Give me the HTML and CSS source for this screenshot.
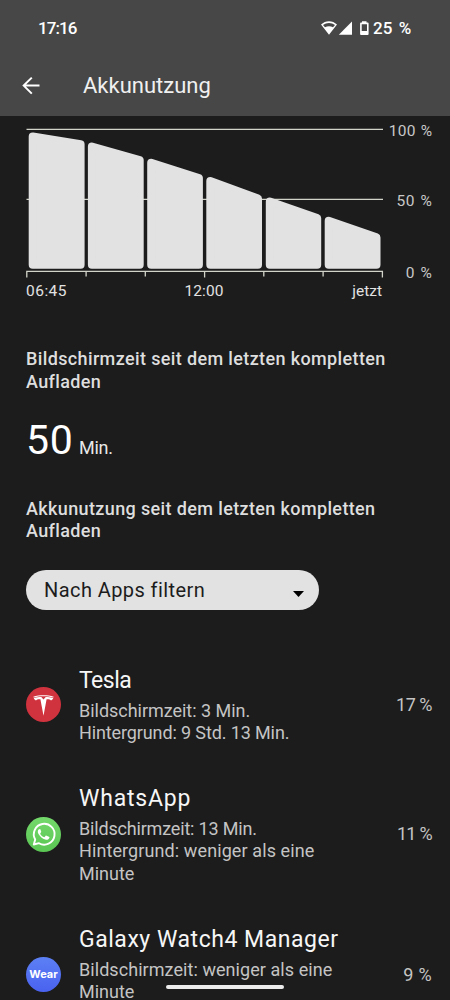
FILE: index.html
```
<!DOCTYPE html>
<html lang="de">
<head>
<meta charset="utf-8">
<title>Akkunutzung</title>
<link rel="stylesheet" href="styles.css">
</head>
<body>
<div class="screen">
  <header class="top">
    <div class="status">
      <span class="clock">17:16</span>
      <svg class="status-icons" width="51" height="21" viewBox="320 18 51 21" fill="#fff">
        <path fill-rule="evenodd" d="M321 24.600C325.500 20 332.500 20 337 24.600L329 34.700ZM323 24.900L325 27.300C327.500 25.800 330.500 25.800 333 27.300L335 24.900C331.500 22.200 326.500 22.200 323 24.900Z"/>
        <path d="M338.800 34.700L352 21.500V34.700Z"/>
        <path fill-rule="evenodd" d="M362 21.200H366.500V22.500H367.700Q368.600 22.500 368.600 23.400V34Q368.600 34.900 367.700 34.900H361Q360.100 34.900 360.100 34V23.400Q360.100 22.500 361 22.500H362ZM361.700 24.300V31H367V24.300Z"/>
      </svg>
      <span class="charge">25 %</span>
    </div>
    <div class="bar">
      <svg class="back" width="20" height="20" viewBox="0 0 20 20" fill="none" stroke="#fff" stroke-width="2"><path d="M18.500 9.600H2.500M10.800 1.600L2.700 9.600L10.800 17.600"/></svg>
      <h1 class="title">Akkunutzung</h1>
    </div>
  </header>

  <section class="chart">
    <div class="plot">
      <svg class="graph" width="358" height="164" viewBox="26 116 358 164">
        <g stroke="#d3d4c9" stroke-width="1.300"><path d="M26.500 129.300H383M26.500 199.400H383"/></g>
        <g fill="#e2e2e2" stroke="#e2e2e2" stroke-width="8" stroke-linejoin="round">
          <path d="M32.700 136.500L80.600 144.300V264.700H32.700Z"/>
          <path d="M91.900 146.500L139.700 160.100V264.700H91.900Z"/>
          <path d="M151.200 162.700L198.900 178.000V264.700H151.200Z"/>
          <path d="M210.300 181.100L258 198.400V264.700H210.300Z"/>
          <path d="M269.800 201.600L317.200 218.100V264.700H269.800Z"/>
          <path d="M328.700 220.800L376.500 237.400V264.700H328.700Z"/>
        </g>
        <path fill="none" stroke="#d3d4c9" stroke-width="1.300" d="M26.800 277.500V271.300H382.400V277.500M86.100 271.300V276.500M145.300 271.300V276.500M204.600 271.300V277.500M263.800 271.300V276.500M323.100 271.300V276.500"/>
      </svg>
      <div class="times"><span class="t1">06:45</span><span class="t2">12:00</span><span class="t3">jetzt</span></div>
    </div>
    <div class="levels"><span class="l1">100 %</span><span class="l2">50 %</span><span class="l3">0 %</span></div>
  </section>

  <h2 class="heading">Bildschirmzeit seit dem letzten kompletten Aufladen</h2>
  <p class="total"><span class="num">50</span><span class="unit">Min.</span></p>
  <h2 class="heading second">Akkunutzung seit dem letzten kompletten Aufladen</h2>

  <div class="filter">
    <span>Nach Apps filtern</span>
    <svg width="11" height="6" viewBox="0 0 11 6"><path d="M0 0H11L5.500 6Z"/></svg>
  </div>

  <ul class="apps">
    <li class="app">
      <svg class="icon" width="35" height="35" viewBox="0 0 35 35">
        <circle cx="17.500" cy="17.500" r="17.500" fill="#d0323e"/>
        <g fill="#fff"><path d="M7.300 9.700C13.500 7.800 21.500 7.800 27.700 9.700L27.400 10.400C21.500 8.900 13.500 8.900 7.600 10.400Z"/>
        <path d="M7.700 11C10.500 10.100 13 9.900 15.300 9.900L17.500 12.600L19.700 9.900C22 9.900 24.500 10.100 27.300 11C26.900 12.300 26.100 13 25 13.400C24.400 12.400 22.800 12.100 20.600 12.200L17.500 28.800L14.400 12.200C12.200 12.100 10.600 12.400 10 13.400C8.900 13 8.100 12.300 7.700 11Z"/></g>
      </svg>
      <div class="info"><h3 class="n1">Tesla</h3><p><span class="d1">Bildschirmzeit: 3 Min.</span><br><span class="d2">Hintergrund: 9 Std. 13 Min.</span></p></div>
      <span class="share s1">17 %</span>
    </li>
    <li class="app">
      <svg class="icon" width="35" height="35" viewBox="0 0 35 35">
        <defs><linearGradient id="green" x2="0" y2="1"><stop stop-color="#74d96b"/><stop offset="1" stop-color="#5ac653"/></linearGradient></defs>
        <circle cx="17.500" cy="17.500" r="17.500" fill="url(#green)"/>
        <path d="M7.800 27.500L9.200 22.400A10.400 10.400 0 1 1 13 26.200Z" fill="none" stroke="#fff" stroke-width="1.900" stroke-linejoin="round"/>
        <path fill="#fff" d="M14.200 11.900C13.700 11.800 13 12 12.600 12.600C11.500 13.800 11.600 15.600 12.500 17C14.100 19.600 16.300 21.700 19.300 22.600C21 23.200 23 22.500 23.400 20.800C23.500 20.200 23.400 20 22.900 19.800L20.500 18.700C20.100 18.500 19.800 18.600 19.500 19L18.600 20C18.300 20.300 18 20.300 17.600 20.100C16.100 19.400 15 18.300 14.300 16.900C14.100 16.500 14.200 16.300 14.500 16C15 15.500 15.400 15 15.200 14.500L14.400 12.400C14.300 12.100 14.300 12 14.200 11.900Z"/>
      </svg>
      <div class="info"><h3 class="n2">WhatsApp</h3><p><span class="d3">Bildschirmzeit: 13 Min.</span><br><span class="d4">Hintergrund: weniger als eine</span><br><span class="d5">Minute</span></p></div>
      <span class="share s2">11 %</span>
    </li>
    <li class="app">
      <div class="icon wear">Wear</div>
      <div class="info tall"><h3 class="n3">Galaxy Watch4 Manager</h3><p><span class="d6">Bildschirmzeit: weniger als eine</span><br><span class="d5">Minute</span></p></div>
      <span class="share s3">9 %</span>
    </li>
  </ul>
  <div class="home"></div>
</div>
</body>
</html>
```
FILE: styles.css
```
* { box-sizing: border-box; margin: 0; padding: 0; }
body { background: #1c1c1c; font-family: Roboto, "Noto Sans", sans-serif; }
.screen { position: relative; width: 450px; height: 1000px; overflow: hidden; background: #1c1c1c; color: #e2e2e2; }

.top { height: 116px; padding-top: 18px; background: #474747; color: #fff; }
.status { display: flex; height: 21px; padding-left: 38px; font-size: 17px; font-weight: 500; line-height: 21px; }
.clock { width: 282px; letter-spacing: -0.9px; }
.status-icons { flex: none; }
.charge { padding-left: 2px; letter-spacing: 0.2px; word-spacing: 1.500px; }
.bar { display: flex; align-items: center; padding: 32px 0 0 21px; }
.back { margin-right: 42px; }
.title { font-size: 22px; font-weight: 400; line-height: 30px; color: #f0f0f0; }

.chart { display: flex; height: 184px; padding: 0 18px 0 26px; font-size: 15.500px; line-height: 20px; }
.plot { width: 358px; }
.graph { display: block; }
.times { display: grid; grid-template-columns: 158.500px 1fr auto; padding: 0.500px 2px 0 0; }
.t1 { letter-spacing: 0.480px; }
.t2 { letter-spacing: 0.080px; }
.levels { display: flex; flex: 1; flex-direction: column; align-items: flex-end; padding-top: 5px; color: #c8c8c8; white-space: nowrap; }
.l1 { letter-spacing: 0.300px; word-spacing: 1px; margin-right: -0.500px; }
.l2 { margin: 50px -0.500px 0 0; letter-spacing: 0.600px; word-spacing: 1px; }
.l3 { margin: 52px -0.500px 0 0; letter-spacing: 0.600px; word-spacing: 1px; }

.heading { width: 380px; margin: 48px 0 0 26px; font-size: 18px; font-weight: 500; line-height: 22.500px; letter-spacing: 0.370px; color: #dedede; }
.total { display: flex; align-items: baseline; height: 46px; margin: 24px 0 0 26px; line-height: 46px; }
.num { width: 53px; font-size: 41px; letter-spacing: 0.800px; color: #fff; }
.unit { font-size: 18px; letter-spacing: -0.300px; color: #e8e8e8; }
.second { margin-top: 34.500px; }

.filter { display: flex; align-items: center; justify-content: space-between; width: 292.500px; height: 40px; margin: 27.500px 0 0 26px; padding: 0 14.500px 0 18px; border-radius: 20px; background: #e2e2e2; color: #1c1c1c; font-size: 20px; letter-spacing: 0.420px; }
.filter svg { margin-top: 7px; }

.apps { padding: 56px 18px 0 26px; list-style: none; }
.app { display: flex; align-items: center; margin-bottom: 39.500px; }
.icon { flex: none; width: 35px; height: 35px; margin: -1px 18px 0 0; }
.info { flex: 1; white-space: nowrap; }
.info h3 { font-size: 23px; font-weight: 400; line-height: 30px; color: #f6f6f6; }
.info p { margin-top: 3.700px; font-size: 18px; line-height: 22.500px; color: #c4c4c4; }
.tall { height: 101px; }
.n1 { letter-spacing: -0.500px; }
.n2 { letter-spacing: 0.800px; }
.n3 { letter-spacing: 0.530px; }
.d1 { letter-spacing: -0.030px; }
.d2 { letter-spacing: -0.120px; }
.d3 { letter-spacing: -0.180px; }
.d4 { letter-spacing: 0.100px; }
.d5 { letter-spacing: 0; }
.d6 { letter-spacing: 0.060px; }
.share { margin-top: -1px; font-size: 18px; line-height: 22px; color: #c4c4c4; }
.s1 { letter-spacing: -0.500px; }
.s2 { letter-spacing: -0.700px; }
.s3 { letter-spacing: 0.300px; }
.wear { border-radius: 50%; background: linear-gradient(#5c80f4, #4a62f0); color: #fff; font: 700 11px/35px Inter, sans-serif; text-align: center; }

.home { position: absolute; left: 166px; bottom: 11px; width: 118px; height: 4px; border-radius: 2px; background: #ececec; }
```
